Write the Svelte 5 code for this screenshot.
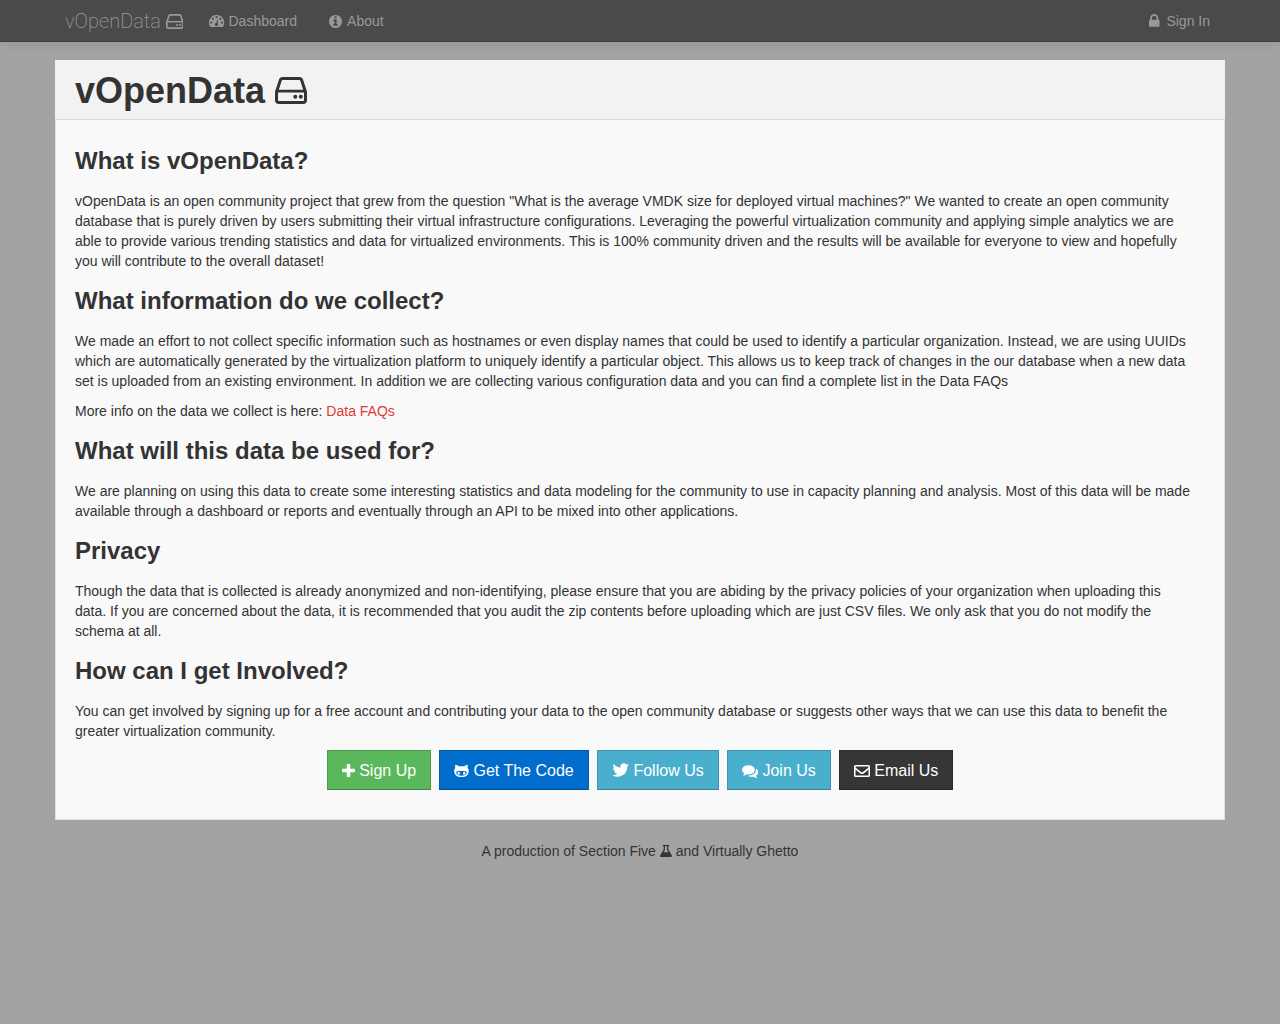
<script>
  const sections = [
    {
      title: 'What is vOpenData?',
      text: 'vOpenData is an open community project that grew from the question "What is the average VMDK size for deployed virtual machines?" We wanted to create an open community database that is purely driven by users submitting their virtual infrastructure configurations. Leveraging the powerful virtualization community and applying simple analytics we are able to provide various trending statistics and data for virtualized environments. This is 100% community driven and the results will be available for everyone to view and hopefully you will contribute to the overall dataset!'
    },
    {
      title: 'What information do we collect?',
      text: 'We made an effort to not collect specific information such as hostnames or even display names that could be used to identify a particular organization. Instead, we are using UUIDs which are automatically generated by the virtualization platform to uniquely identify a particular object. This allows us to keep track of changes in the our database when a new data set is uploaded from an existing environment. In addition we are collecting various configuration data and you can find a complete list in the Data FAQs',
      faq: true
    },
    {
      title: 'What will this data be used for?',
      text: 'We are planning on using this data to create some interesting statistics and data modeling for the community to use in capacity planning and analysis. Most of this data will be made available through a dashboard or reports and eventually through an API to be mixed into other applications.'
    },
    {
      title: 'Privacy',
      text: 'Though the data that is collected is already anonymized and non-identifying, please ensure that you are abiding by the privacy policies of your organization when uploading this data. If you are concerned about the data, it is recommended that you audit the zip contents before uploading which are just CSV files. We only ask that you do not modify the schema at all.'
    },
    {
      title: 'How can I get Involved?',
      text: 'You can get involved by signing up for a free account and contributing your data to the open community database or suggests other ways that we can use this data to benefit the greater virtualization community.'
    }
  ];

  const actions = [
    { label: 'Sign Up', icon: 'plus', tone: 'green' },
    { label: 'Get The Code', icon: 'github', tone: 'blue' },
    { label: 'Follow Us', icon: 'twitter', tone: 'cyan' },
    { label: 'Join Us', icon: 'comments', tone: 'cyan' },
    { label: 'Email Us', icon: 'envelope', tone: 'dark' }
  ];

  const icons = {
    plus: { box: '192 128 1408 1408', d: 'M1600 736v192q0 40-28 68t-68 28h-416v416q0 40-28 68t-68 28h-192q-40 0-68-28t-28-68v-416h-416q-40 0-68-28t-28-68v-192q0-40 28-68t68-28h416v-416q0-40 28-68t68-28h192q40 0 68 28t28 68v416h416q40 0 68 28t28 68z' },
    twitter: { box: '64 128 1664 1536', d: 'M1684 408q-67 98-162 167 1 14 1 42 0 130-38 259.500t-115.500 248.500-184.500 210.500-258 146-323 54.500q-271 0-496-145 35 4 78 4 225 0 401-138-105-2-188-64.500t-114-159.500q33 5 61 5 43 0 85-11-112-23-185.500-111.500t-73.500-205.500v-4q68 38 146 41-66-44-105-115t-39-154q0-88 44-163 121 149 294.500 238.500t371.500 99.500q-8-38-8-74 0-134 94.500-228.500t228.500-94.500q140 0 236 102 109-21 205-78-37 115-142 178 93-10 186-50z' },
    comments: { box: '0 128 1792 1536', d: 'M1408 768q0 139-94 257t-256.500 186.500-353.500 68.500q-86 0-176-16-124 88-278 128-36 9-86 16h-3q-11 0-20.500-8t-11.500-21q-1-3-1-6.500t.5-6.500 2-6l2.500-5 3.500-5.500 4-5 4.500-5 4-4.500q5-6 23-25t26-29.500 22.500-29 25-38.500 20.500-44q-124-72-195-177t-71-224q0-139 94-257t256.500-186.500 353.500-68.500 353.500 68.500 256.500 186.500 94 257zm384 256q0 120-71 224.500t-195 176.500q10 24 20.500 44t25 38.500 22.500 29 26 29.500 23 25q1 1 4 4.500t4.500 5 4 5 3.500 5.500l2.500 5 2 6 .5 6.500-1 6.500q-3 14-13 22t-22 7q-50-7-86-16-154-40-278-128-90 16-176 16-271 0-472-132 58 4 88 4 161 0 309-45t264-129q125-92 192-212t67-254q0-77-23-152 129 71 204 178t75 230z' },
    lock: { box: '320 128 1152 1536', d: 'M640 768h512v-192q0-106-75-181t-181-75-181 75-75 181v192zm832 96v576q0 40-28 68t-68 28h-960q-40 0-68-28t-28-68v-576q0-40 28-68t68-28h32v-192q0-184 132-316t316-132 316 132 132 316v192h32q40 0 68 28t28 68z' },
    about: { box: '128 128 1536 1536', d: 'M1152 1376v-160q0-14-9-23t-23-9h-96v-512q0-14-9-23t-23-9h-320q-14 0-23 9t-9 23v160q0 14 9 23t23 9h96v320h-96q-14 0-23 9t-9 23v160q0 14 9 23t23 9h448q14 0 23-9t9-23zm-128-896v-160q0-14-9-23t-23-9h-192q-14 0-23 9t-9 23v160q0 14 9 23t23 9h192q14 0 23-9t9-23zm640 416q0 209-103 385.500t-279.500 279.500-385.500 103-385.500-103-279.500-279.500-103-385.500 103-385.500 279.500-279.500 385.500-103 385.500 103 279.500 279.500 103 385.500z' },
    github: { box: '0 0 16 15', d: 'M1.600.8C3 .8 4.200 1.600 5 2.400h6c.8-.8 2-1.600 3.400-1.600.5 1.200.4 2.600.2 3.400.9 1 1.300 2.100 1.200 3.600C15.600 12 13 14 8 14S.4 12 .2 7.800C.1 6.300.5 5.200 1.400 4.200c-.2-.8-.3-2.200.2-3.400zM4.500 7.400C3.200 7.400 2.400 8.200 2.400 9.500c0 2.300 2.300 3 5.600 3s5.600-.7 5.600-3c0-1.300-.8-2.100-2.100-2.100-1.200 0-2 .2-3.500.2s-2.300-.2-3.500-.2zM5 8.200c.8 0 1.300.8 1.300 1.700S5.800 11.500 5 11.500s-1.300-.7-1.300-1.600S4.200 8.200 5 8.200zm6 0c.8 0 1.300.8 1.300 1.700s-.5 1.600-1.300 1.600-1.300-.7-1.300-1.600.5-1.700 1.300-1.700z' },
    envelope: { box: '0 0 16 14', d: 'M1.500 1h13A1.500 1.500 0 0 1 16 2.500v9a1.500 1.500 0 0 1-1.500 1.500h-13A1.500 1.500 0 0 1 0 11.500v-9A1.500 1.500 0 0 1 1.500 1zM1.500 5.500v5.600c0 .2.100.4.300.4h12.400c.2 0 .3-.2.300-.4V5.500c-1.500 1.300-3 2.500-4.500 3.700-.6.500-1.300.9-2 .9s-1.400-.4-2-.9C4.500 8 3 6.800 1.500 5.500zM1.800 2.500c-.2 0-.3.100-.3.300 0 .9 1 1.600 2 2.400l3 2.400c.4.300 1 .8 1.500.8s1.100-.5 1.500-.8l3-2.400c1-.8 2-1.500 2-2.400 0-.2-.1-.3-.3-.3z' },
    dashboard: { box: '0 0 14 12', d: 'M7 0a7 7 0 0 1 5.900 10.800c-.1.200-.3.200-.5.200H1.600c-.2 0-.4 0-.5-.2A7 7 0 0 1 7 0zM2 6a1 1 0 1 0 0 2 1 1 0 0 0 0-2zM3.500 2.500a1 1 0 1 0 0 2 1 1 0 0 0 0-2zM7 1a1 1 0 1 0 0 2 1 1 0 0 0 0-2zm3.500 1.500a1 1 0 1 0 0 2 1 1 0 0 0 0-2zM12 6a1 1 0 1 0 0 2 1 1 0 0 0 0-2zM7.600 4.300l-.8 3a1.500 1.500 0 1 0 1 .3l.8-3z' },
    drive: { box: '0 0 32 27', d: 'M7.500 0h17c1.700 0 3 1 3.500 2.500l3.700 11.300c.2.600.3 1 .3 1.700V23a4 4 0 0 1-4 4H4a4 4 0 0 1-4-4v-7.500c0-.7.1-1.100.3-1.700L4 2.500C4.500 1 5.800 0 7.500 0zM3 15.500V23c0 .6.400 1 1 1h24c.6 0 1-.4 1-1v-7.500zM3.800 12.800h24.400L25.200 3.600c-.1-.4-.4-.6-.8-.6H7.600c-.4 0-.7.200-.8.600zM20.300 17.800a2 2 0 1 1 0 4 2 2 0 0 1 0-4zm5.500 0a2 2 0 1 1 0 4 2 2 0 0 1 0-4z' },
    flask: { box: '0 0 13 13', d: 'M3.500 0h6a.6.6 0 0 1 0 1.300H9V5l3.700 6c.7 1.100.2 2-1.100 2H1.400C.1 13-.4 12.100.3 11L4 5V1.300h-.5a.6.600 0 0 1 0-1.300zM5.300 1.300v4.100L3.900 7.800h5.200L7.700 5.400V1.300z' }
  };
</script>

{#snippet icon(name)}
  <svg class="icon {name}" viewBox={icons[name].box} aria-hidden="true">
    <path d={icons[name].d} fill="currentColor" fill-rule="evenodd" />
  </svg>
{/snippet}

<header class="navbar">
  <nav class="container nav">
    <a class="brand" href="#top">vOpenData {@render icon('drive')}</a>
    <a href="#dashboard">{@render icon('dashboard')} Dashboard</a>
    <a href="#about">{@render icon('about')} About</a>
    <a class="sign-in" href="#signin">{@render icon('lock')} Sign In</a>
  </nav>
</header>

<main class="container panel" id="top">
  <div class="heading">
    <h1>vOpenData {@render icon('drive')}</h1>
  </div>
  <div class="content">
    {#each sections as section}
      <section>
        <h2>{section.title}</h2>
        <p>{section.text}</p>
        {#if section.faq}
          <p>More info on the data we collect is here: <a href="#faq">Data FAQs</a></p>
        {/if}
      </section>
    {/each}
    <div class="actions">
      {#each actions as action}
        <a class="button {action.tone}" href="#{action.icon}">{@render icon(action.icon)} {action.label}</a>
      {/each}
    </div>
  </div>
</main>

<footer>A production of Section Five {@render icon('flask')} and Virtually Ghetto</footer>

<style>
  :global(body) {
    background: #a3a3a3;
    color: #333;
    font: 14px/20px "Helvetica Neue", "Liberation Sans", Arial, sans-serif;
  }
  .container {
    box-sizing: border-box;
    width: calc(100% - 110px);
    max-width: 1170px;
    margin: 0 auto;
  }
  .icon {
    height: 14px;
    vertical-align: -2px;
  }
  .navbar {
    background: #4a4a4a;
    border-bottom: 1px solid #404040;
    box-shadow: 0 1px 10px rgba(0, 0, 0, 0.1);
  }
  .nav {
    display: flex;
    align-items: center;
    height: 41px;
    padding: 0 15px 0 10px;
  }
  .nav a {
    color: #999;
    text-decoration: none;
    white-space: nowrap;
    margin-right: 32px;
  }
  .nav .brand {
    font: 200 20px/20px Roboto, sans-serif;
    margin-right: 26px;
  }
  .brand .icon {
    height: 15px;
    vertical-align: -1px;
  }
  .nav .sign-in {
    margin: 0 0 0 auto;
  }
  .nav .dashboard,
  .nav .about {
    height: 13px;
  }
  .about {
    margin-right: 2px;
  }
  .lock {
    margin-right: 3px;
  }
  .panel {
    margin-top: 18px;
    background: #f9f9f9;
  }
  .heading {
    background: #f2f2f2;
    border-bottom: 1px solid #d9d9d9;
    padding: 11px 20px 8px;
  }
  h1 {
    margin: 0;
    font-size: 36px;
    line-height: 40px;
  }
  h1 .icon {
    height: 27px;
    vertical-align: -1px;
  }
  .content {
    border: 1px solid #e3e3e3;
    border-top: 0;
    padding: 21px 19px 29px;
  }
  h2 {
    margin: 0 0 10px;
    font-size: 24px;
    line-height: 40px;
  }
  section + section h2 {
    margin-top: 10px;
  }
  p {
    margin: 0 0 10px;
    padding-right: 12px;
  }
  p a {
    color: #dd3b30;
    text-decoration: none;
  }
  section:last-of-type p {
    margin-bottom: 9px;
  }
  .actions {
    display: flex;
    flex-wrap: wrap;
    justify-content: center;
    gap: 8px;
  }
  .button {
    padding: 10px 14px 8px;
    border: 1px solid rgba(0, 0, 0, 0.15);
    border-bottom-color: rgba(0, 0, 0, 0.25);
    color: #fff;
    font-size: 16px;
    line-height: 20px;
    text-decoration: none;
    white-space: nowrap;
  }
  .button .plus {
    height: 13px;
    vertical-align: -1px;
  }
  .button .twitter {
    height: 16px;
  }
  .green { background: #5bb75b; }
  .blue { background: #006dcc; }
  .cyan { background: #49afcd; }
  .dark { background: #363636; }
  footer {
    margin: 21px 0 20px;
    text-align: center;
  }
  footer .icon {
    height: 12px;
    vertical-align: -1px;
  }
</style>
